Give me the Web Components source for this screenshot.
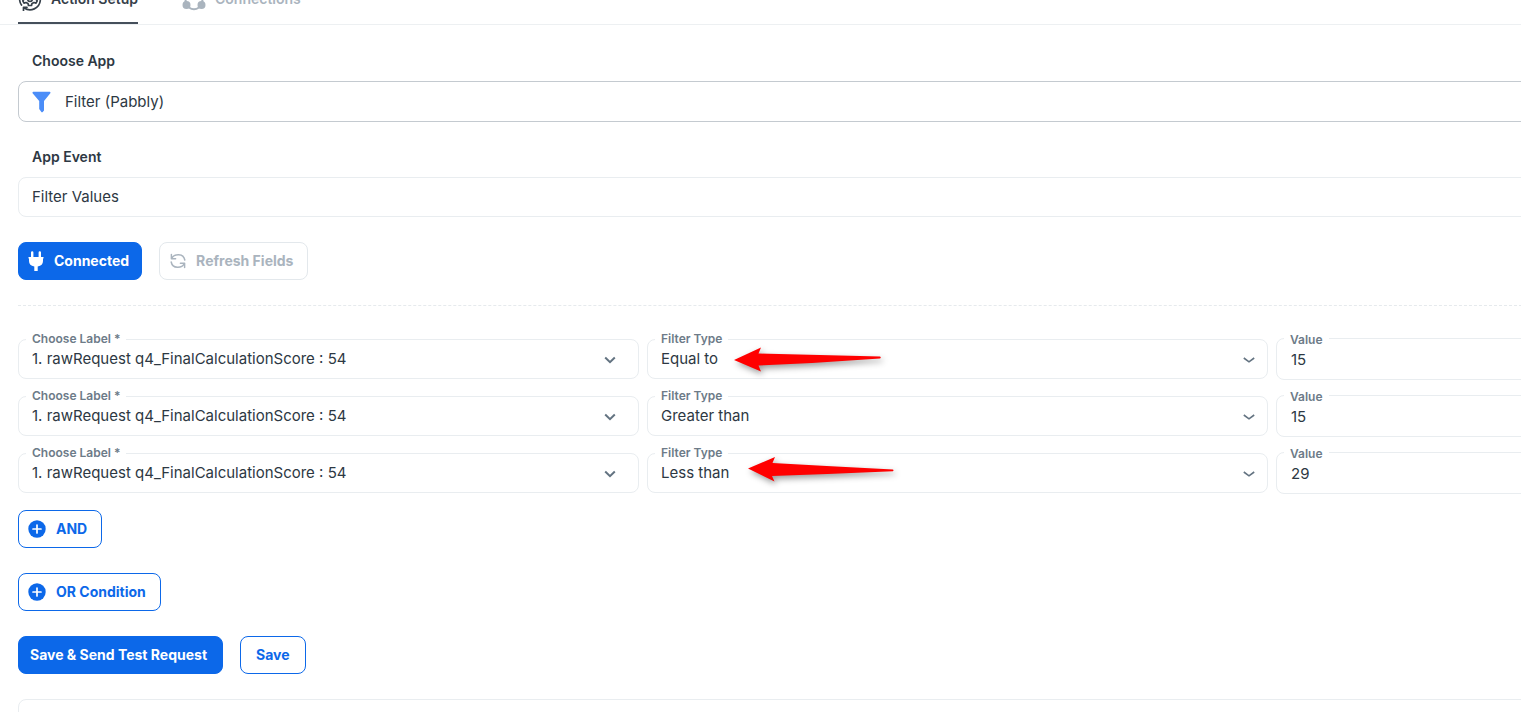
<!DOCTYPE html>
<html lang="en">
<head>
<meta charset="utf-8">
<title>Action Setup</title>
<style>
html{overflow:hidden}
body{margin:0;background:#fff;color:#2d3843;font-family:Inter,"Liberation Sans",sans-serif;font-size:15px;line-height:20px}
</style>
</head>
<body>
<action-setup></action-setup>
<script>
const define = (name, html, setup) => customElements.define(name, class extends HTMLElement {
  constructor() {
    super();
    this.attachShadow({ mode: "open" });
  }
  connectedCallback() {
    if (this.shadowRoot.childNodes.length) return;
    const t = document.createElement("template");
    t.innerHTML = "<style>*{box-sizing:border-box}</style>" + html;
    this.shadowRoot.append(t.content.cloneNode(true));
    if (setup) setup(this, this.shadowRoot);
  }
});

const icons = {
  gear: '<svg width="24" height="24" viewBox="0 0 24 24" fill="none" stroke="currentColor" stroke-width="1.7" stroke-linecap="round" stroke-linejoin="round"><path d="M6 20.800A10.300 10.300 0 0 0 22.300 13.500M21.900 9A10.300 10.300 0 0 0 2 10M1.700 13.500Q2 16 3.500 18"/><path d="M5.500 23.500V20.300H9"/><circle cx="12" cy="12" r="2.400"/><path d="m10.500 5.500-.5 2-2 1-2-.6-1.200 2.300L6.300 12l-1.500 1.800L6 16.100l2-.6 2 1 .5 2h3l.5-2 2-1 2 .6 1.200-2.300-1.500-1.800 1.500-1.800L18 7.900l-2 .6-2-1-.5-2z"/></svg>',
  nodes: '<svg width="24" height="24" viewBox="0 0 24 24" fill="none" stroke="currentColor" stroke-width="2"><path d="M8.500 6Q3.500 8 3.500 16M15.500 6Q20.500 8 20.500 16M7 20.500Q12 24 17 20.500"/><circle cx="12" cy="5" r="3" fill="currentColor"/><circle cx="4.500" cy="18" r="3" fill="currentColor"/><circle cx="19.500" cy="18" r="3" fill="currentColor"/></svg>',
  plug: '<svg width="18" height="22" viewBox="0 0 18 22" fill="currentColor"><path d="M4 2.500a1.200 1.200 0 0 1 2.400 0V7H4zM11.600 2.500a1.200 1.200 0 0 1 2.400 0V7h-2.400zM1.500 7h15v1.500H16V11q0 4.500-5.300 5.500V21H7.300v-4.500Q2 15.500 2 11V8.500h-.5z"/></svg>',
  refresh: '<svg width="18" height="18" viewBox="0 0 18 18" fill="none" stroke="currentColor" stroke-width="1.500" stroke-linecap="round" stroke-linejoin="round"><path d="M2.400 2.500v4.200h4.200M2.700 6.500C5 1.500 14.500 1 15.800 8M15.600 15.500v-4.200h-4.200M15.300 11.500C13 16.500 3.500 17 2.200 10"/></svg>',
  plus: '<svg width="18" height="18" viewBox="0 0 18 18"><circle cx="9" cy="9" r="8.700" fill="currentColor"/><path d="M9 5v8M5 9h8" stroke="#fff" stroke-width="1.700" stroke-linecap="round"/></svg>'
};
const chevron = '<svg class="chev" width="12" height="8" viewBox="0 0 12 8" fill="none" stroke="#637381"><path/></svg>';

define("tab-link", `<style>
  :host{display:block;color:#aab4be;border-bottom:2px solid transparent}
  :host([active]){color:#36404a;border-color:#454f5b}
  a{display:flex;align-items:center;gap:9px;color:inherit;text-decoration:none;font-size:14px;font-weight:600;line-height:24px;padding-bottom:11px}
  svg{display:block}
</style><a href="#"><i></i><span><slot></slot></span></a>`, (el, r) => {
  r.querySelector("i").outerHTML = icons[el.getAttribute("icon")];
});

define("app-button", `<style>
  :host{display:block}
  button{display:flex;align-items:center;gap:10px;height:38px;padding:0 14px 0 9px;border:1px solid #0c68e9;border-radius:8px;background:#fff;color:#0c68e9;font:700 14px/20px Inter,"Liberation Sans",sans-serif;white-space:nowrap}
  :host([kind=solid]) button{background:#0c68e9;color:#fff;gap:9px;padding:0 12px 0 8px}
  :host([kind=muted]) button{border-color:#e3e8ec;color:#aab4be;gap:9px}
  :host([plain]) button{padding:0 15px 0 11px}
  :host([roomy]) button{padding:0 15px}
  svg{display:block;flex:none}
</style><button type="button"><i hidden></i><slot></slot></button>`, (el, r) => {
  const i = r.querySelector("i"), n = el.getAttribute("icon");
  if (n) i.outerHTML = icons[n]; else i.remove();
});

define("stacked-field", `<style>
  :host{display:block}
  label{display:block;padding-left:14px;font-size:14px;font-weight:600;line-height:20px;margin-bottom:10px}
  .box{display:flex;align-items:center;height:40px;border:1px solid #e9edf0;border-radius:8px;padding:0 13px}
  :host([strong]) .box{height:41px;border-color:#c4cad0}
  ::slotted(svg){flex:none;margin-right:14px}
  input{flex:1;min-width:0;border:0;outline:0;padding:0;background:none;color:#2d3843;font:400 15px/20px Inter,"Liberation Sans",sans-serif}
</style><label for="f"></label><div class="box"><slot></slot><input id="f" type="text"></div>`, (el, r) => {
  r.querySelector("label").textContent = el.getAttribute("label");
  r.querySelector("input").value = el.getAttribute("value");
});

const floatCss = `<style>
  :host{display:block;position:relative;min-width:0}
  label{position:absolute;top:-9px;left:8px;padding:0 6px;background:#fff;color:#6d7b88;font-size:12px;font-weight:600;line-height:18px;white-space:nowrap}
  select,input{display:block;width:100%;height:40px;border:1px solid #e9edf0;border-radius:8px;background:#fff;appearance:none;outline:0;margin:0;padding:0 40px 0 13px;color:#2d3843;font:400 15px/20px Inter,"Liberation Sans",sans-serif}
  input{height:42px;padding-left:14px}
  :host([tall]) label{top:-7px}
  .chev{position:absolute;right:23px;top:17px;pointer-events:none}
  :host([thin]) .chev{right:13px}
</style>`;
define("float-select", floatCss + `<label for="f"></label><select id="f"><option></option></select>${chevron}<slot></slot>`, (el, r) => {
  r.querySelector("label").textContent = el.getAttribute("label");
  r.querySelector("option").textContent = el.getAttribute("value");
  const p = r.querySelector(".chev path"), thin = el.hasAttribute("thin");
  p.setAttribute("d", thin ? "M.8 2 6 5.800 11.200 2" : "M1.200 1.500 6 6.200l4.800-4.700");
  p.setAttribute("stroke-width", thin ? "1.600" : "2");
});
define("float-input", floatCss + `<label for="f"></label><input id="f" type="text">`, (el, r) => {
  r.querySelector("label").textContent = el.getAttribute("label");
  r.querySelector("input").value = el.getAttribute("value");
});

define("arrow-mark", `<style>
  :host{position:absolute;left:87px;top:5px;pointer-events:none}
  :host([down]){left:101px}
  svg{display:block;overflow:visible;filter:drop-shadow(2px 3px 3px rgba(0,0,0,.4))}
</style><svg width="150" height="34" viewBox="0 0 150 34" fill="#f00"><path/></svg>`, (el, r) => {
  r.querySelector("path").setAttribute("d", el.hasAttribute("down")
    ? "M0 10.500 27-1 24.500 5Q86 8.500 145 11.500q1 .8 0 1.800Q86 16 24 18L26.500 23.500z"
    : "M0 16 27 3.500 24.500 9.500Q86 11 146 12.500q1.500 1 0 2Q86 19 24.500 21.500L27 27.500z");
});

define("filter-row", `<style>
  :host{display:grid;grid-template-columns:621fr 621fr 261fr;column-gap:8px;align-items:center}
</style><slot></slot>`);

define("action-setup", `<style>
  :host{display:block}
  nav{display:flex;align-items:flex-end;gap:44px;height:25px;padding:0 18px;border-bottom:1px solid #edf0f2}
  main{padding:26px 0 0 18px;margin-right:-16px}
  stacked-field + stacked-field{margin-top:25px}
  .buttons{display:flex;gap:17px}
  .status{margin-top:25px}
  hr{border:0;border-top:1px dashed #e6eaed;margin:25px 0 32px}
  .rows{display:grid;row-gap:15px}
  .stack{display:grid;gap:25px;justify-items:start;margin-top:16px}
  .result{height:40px;margin-top:25px;border:1px solid #e9edf0;border-radius:8px}
</style>
<nav>
  <tab-link icon="gear" active>Action Setup</tab-link>
  <tab-link icon="nodes">Connections</tab-link>
</nav>
<main>
  <stacked-field label="Choose App" value="Filter (Pabbly)" strong>
    <svg width="19" height="22" viewBox="0 0 19 22" fill="#4b8df8"><path d="M1.200.8h16.600q1 .4.5 1.500L12 10v9.500l-1.500 1.800q-1 .2-1.300-.5L7.200 18V10L.6 2.300Q.2 1.200 1.200.8z"/></svg>
  </stacked-field>
  <stacked-field label="App Event" value="Filter Values"></stacked-field>
  <div class="buttons status">
    <app-button kind="solid" icon="plug">Connected</app-button>
    <app-button kind="muted" icon="refresh">Refresh Fields</app-button>
  </div>
  <hr>
  <div class="rows">
    <filter-row>
      <float-select label="Choose Label *" value="1. rawRequest q4_FinalCalculationScore : 54"></float-select>
      <float-select label="Filter Type" value="Equal to" thin><arrow-mark></arrow-mark></float-select>
      <float-input label="Value" value="15" tall></float-input>
    </filter-row>
    <filter-row>
      <float-select label="Choose Label *" value="1. rawRequest q4_FinalCalculationScore : 54"></float-select>
      <float-select label="Filter Type" value="Greater than" thin></float-select>
      <float-input label="Value" value="15" tall></float-input>
    </filter-row>
    <filter-row>
      <float-select label="Choose Label *" value="1. rawRequest q4_FinalCalculationScore : 54"></float-select>
      <float-select label="Filter Type" value="Less than" thin><arrow-mark down></arrow-mark></float-select>
      <float-input label="Value" value="29" tall></float-input>
    </filter-row>
  </div>
  <div class="stack">
    <app-button icon="plus">AND</app-button>
    <app-button icon="plus">OR Condition</app-button>
    <div class="buttons">
      <app-button kind="solid" plain>Save &amp; Send Test Request</app-button>
      <app-button roomy>Save</app-button>
    </div>
  </div>
  <div class="result"></div>
</main>`);
</script>
</body>
</html>
